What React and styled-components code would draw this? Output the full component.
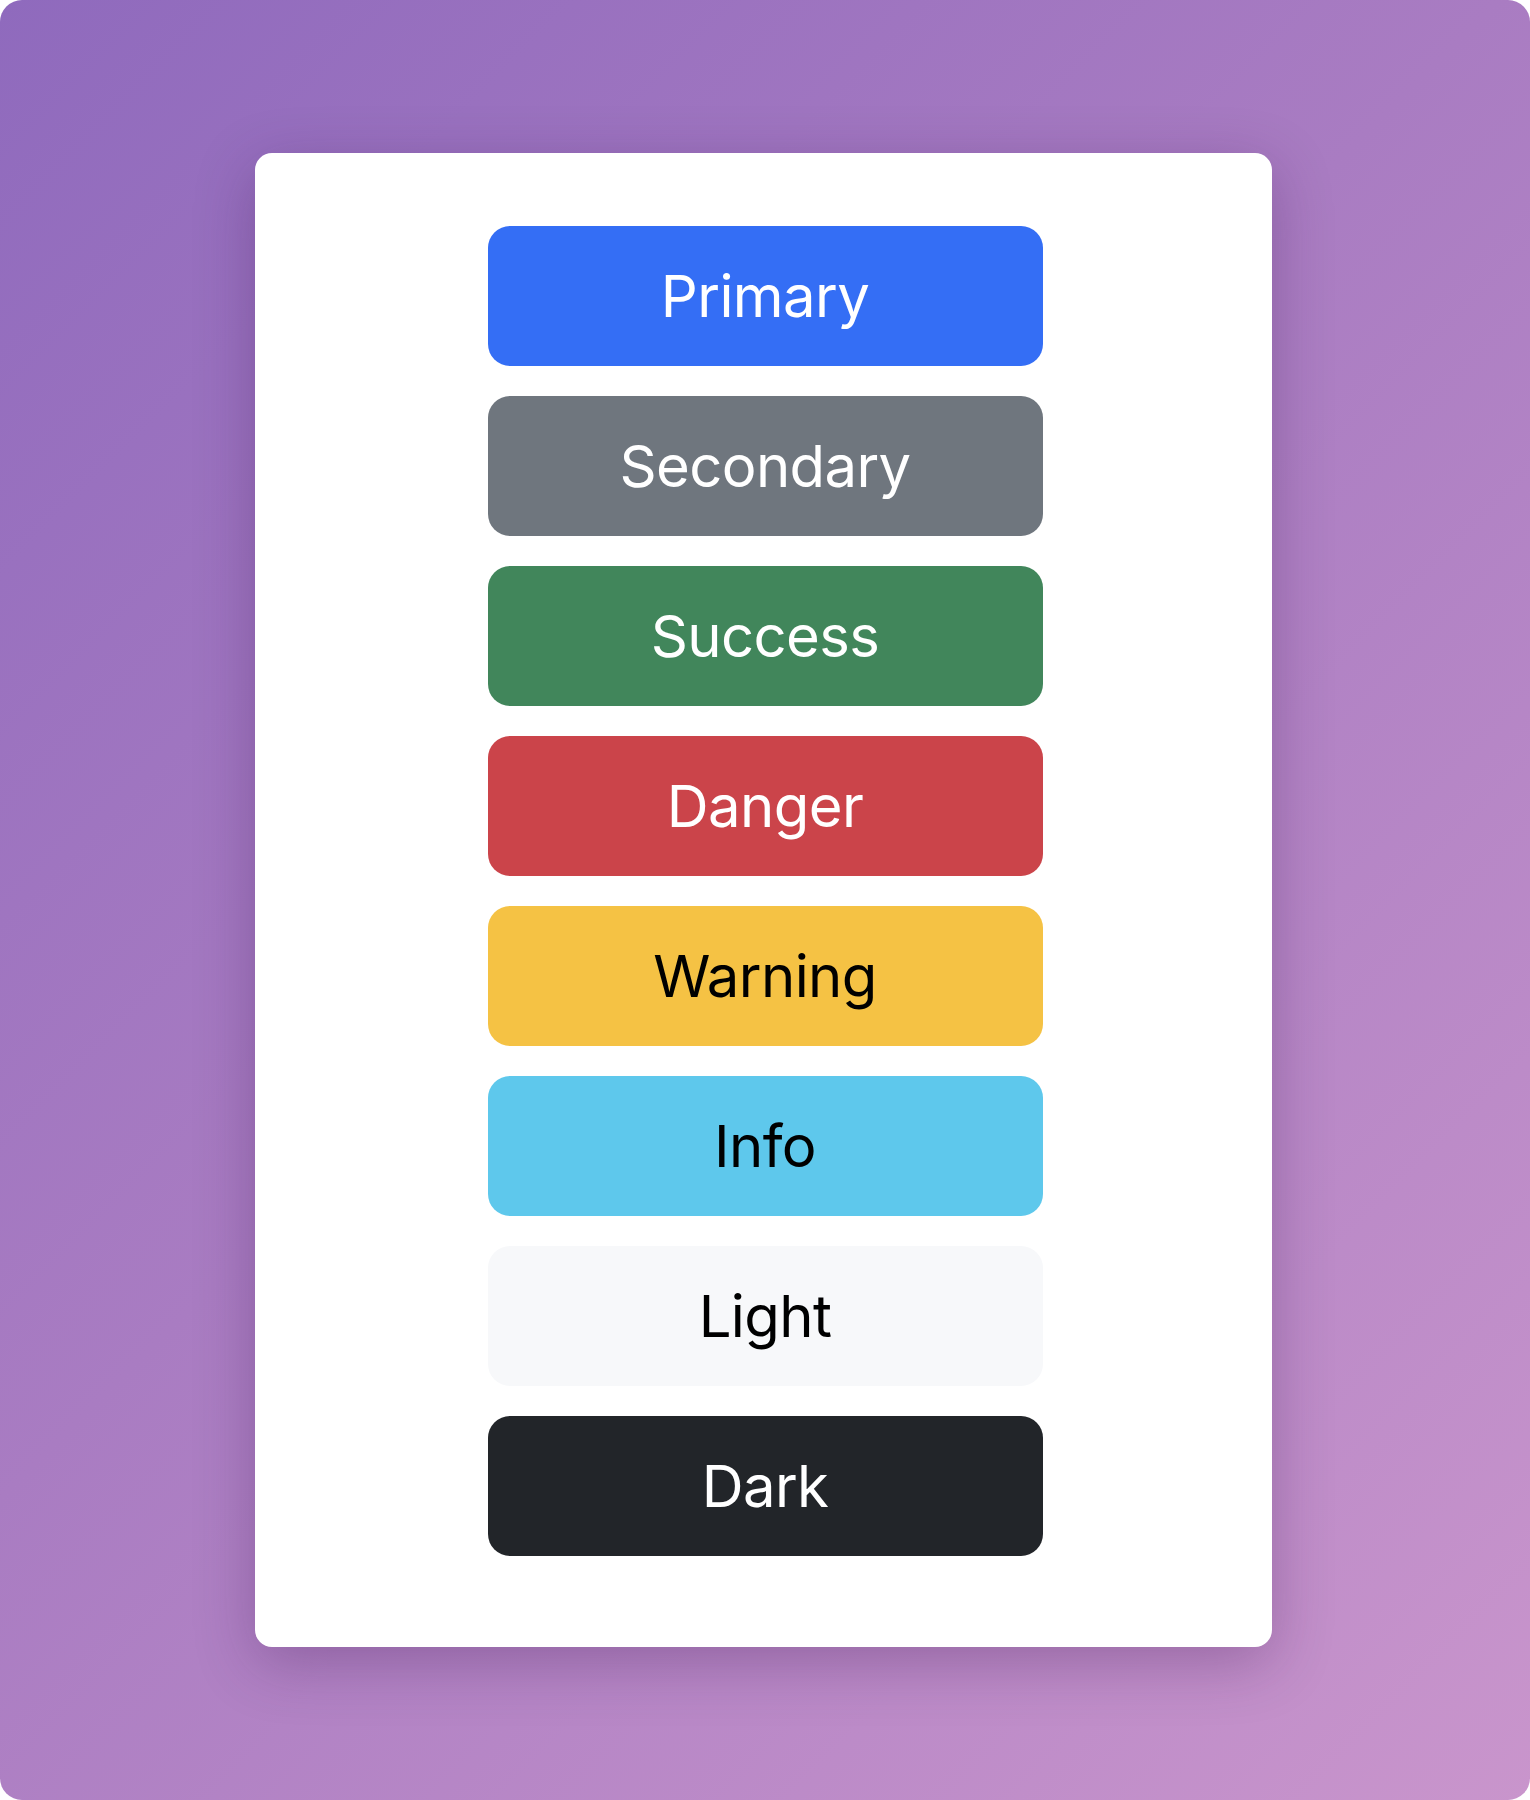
import React from "react";
import styled, { createGlobalStyle } from "styled-components";

const GlobalStyle = createGlobalStyle`
  html, body {
    margin: 0;
    padding: 0;
    background: #ffffff;
  }
  * { box-sizing: border-box; }
`;

const Frame = styled.div`
  width: 1530px;
  height: 1800px;
  border-radius: 22px;
  background: linear-gradient(135deg, #8f6abd 0%, #a97cc2 45%, #c995cc 100%);
  display: flex;
  align-items: center;
  justify-content: center;
`;

const Card = styled.div`
  width: 1017px;
  margin-left: -3px;
  background: #ffffff;
  border-radius: 17px;
  box-shadow: 0 16px 60px rgba(60, 20, 80, 0.3);
  padding: 73px 0 91px 3px;
  display: flex;
  flex-direction: column;
  align-items: center;
  gap: 30px;
`;

const Button = styled.button`
  width: 555px;
  height: 140px;
  border: none;
  border-radius: 22px;
  background: ${(p) => p.$bg};
  color: ${(p) => p.$fg};
  font-family: Inter, "Liberation Sans", sans-serif;
  font-size: 58px;
  font-weight: 400;
  letter-spacing: -0.6px;
  display: flex;
  align-items: center;
  justify-content: center;
  padding: 0;
  cursor: pointer;
`;

const buttons = [
  { label: "Primary", bg: "#346ef5", fg: "#ffffff" },
  { label: "Secondary", bg: "#6f767e", fg: "#ffffff" },
  { label: "Success", bg: "#41865b", fg: "#ffffff" },
  { label: "Danger", bg: "#cb444a", fg: "#ffffff" },
  { label: "Warning", bg: "#f5c244", fg: "#000000" },
  { label: "Info", bg: "#5ec8ec", fg: "#000000" },
  { label: "Light", bg: "#f7f8fa", fg: "#000000" },
  { label: "Dark", bg: "#222529", fg: "#ffffff" },
];

export default function App() {
  return (
    <>
      <GlobalStyle />
      <Frame>
        <Card>
          {buttons.map((b) => (
            <Button key={b.label} $bg={b.bg} $fg={b.fg}>
              {b.label}
            </Button>
          ))}
        </Card>
      </Frame>
    </>
  );
}
